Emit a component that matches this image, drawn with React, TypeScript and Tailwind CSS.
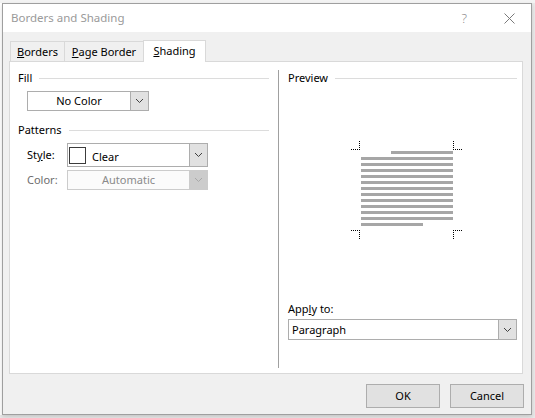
import React from "react";

const font = "font-['Noto_Sans',sans-serif] text-[11px] leading-[16px]";

const Chevron: React.FC<{ dim?: boolean }> = ({ dim }) => (
  <svg width="9" height="6" viewBox="0 0 9 6">
    <path d="M1 1 L4.5 4.5 L8 1" fill="none" stroke={dim ? "#a8a8a8" : "#404040"} strokeWidth="1" />
  </svg>
);

const DropButton: React.FC<{ dim?: boolean }> = ({ dim }) => (
  <div
    className={`flex w-[18px] shrink-0 items-center justify-center border-l ${
      dim ? "border-[#cccccc] bg-[#cccccc]" : "border-[#adadad] bg-[#e1e1e1]"
    }`}
  >
    <Chevron dim={dim} />
  </div>
);

const SectionHeader: React.FC<{ label: string; className?: string }> = ({ label, className }) => (
  <div className={`flex h-[16px] items-center gap-[7px] ${className ?? ""}`}>
    <span className="text-black">{label}</span>
    <div className="h-px flex-1 bg-[#dcdcdc]" />
  </div>
);

// dotted corner marks + text lines of the preview
const PreviewGraphic: React.FC = () => {
  const lines = Array.from({ length: 11 }, (_, i) => 17 + i * 6);
  const dot = { stroke: "#000", strokeWidth: 1, strokeDasharray: "1 1" };
  return (
    <svg width="113" height="100" viewBox="0 0 113 100" className="ml-[72px] mt-[54px] block">
      <line x1="0" y1="9.5" x2="9" y2="9.5" {...dot} />
      <line x1="8.5" y1="1" x2="8.5" y2="10" {...dot} />
      <line x1="102.5" y1="1" x2="102.5" y2="10" {...dot} />
      <line x1="102" y1="9.5" x2="112" y2="9.5" {...dot} />
      <rect x="40" y="11" width="62" height="3" fill="#a6a6a6" />
      {lines.map((y) => (
        <rect key={y} x="10" y={y} width="92" height="3" fill="#a6a6a6" />
      ))}
      <rect x="10" y="83" width="62" height="3" fill="#a6a6a6" />
      <line x1="0" y1="90.5" x2="9" y2="90.5" {...dot} />
      <line x1="8.5" y1="90" x2="8.5" y2="100" {...dot} />
      <line x1="102.5" y1="90" x2="102.5" y2="100" {...dot} />
      <line x1="102" y1="90.5" x2="112" y2="90.5" {...dot} />
    </svg>
  );
};

const App: React.FC = () => {
  return (
    <div className={`h-[418px] w-[535px] overflow-hidden bg-[#e9e9e9] ${font}`}>
      <div className="h-[3px] bg-[#f3f3f3]" />
      <div className="flex">
        <div className="w-[2px] bg-white" />
        <div className="flex h-[412px] w-[530px] flex-col border border-[#9f9f9f] bg-[#f0f0f0] shadow-[0_2px_4px_rgba(0,0,0,0.15)]">
          {/* title bar */}
          <div className="flex h-[28px] shrink-0 items-center bg-white pl-[8px]">
            <span className="text-[11.5px] text-[#9a9a9a]">Borders and Shading</span>
            <span className="ml-auto text-[13px] font-light text-[#8a8a8a]">?</span>
            <svg width="11" height="11" viewBox="0 0 11 11" className="ml-[37px] mr-[16px]">
              <path d="M0.5 0.5 L10.5 10.5 M10.5 0.5 L0.5 10.5" stroke="#7a7a7a" strokeWidth="1" />
            </svg>
          </div>

          {/* body */}
          <div className="flex flex-1 flex-col pl-[6px] pr-[7px] pt-[8px]">
            <div className="relative z-10 ml-[1px] flex h-[22px] items-end">
              <div className="mb-[1px] flex h-[20px] w-[55px] items-center justify-center border-x border-t border-[#d9d9d9] text-black">
                <span><span className="underline">B</span>orders</span>
              </div>
              <div className="mb-[1px] flex h-[20px] w-[78px] items-center justify-center border-t border-[#d9d9d9] text-black">
                <span><span className="underline">P</span>age Border</span>
              </div>
              <div className="flex h-[22px] w-[63px] items-center justify-center border-x border-t border-[#d9d9d9] bg-white pb-[1px] text-black">
                <span><span className="underline">S</span>hading</span>
              </div>
            </div>

            {/* tab panel */}
            <div className="-mt-px mr-px flex h-[313px] border border-[#d9d9d9] bg-white">
              {/* left column */}
              <div className="flex w-[268px] flex-col">
                <SectionHeader label="Fill" className="ml-[8px] mr-[9px] mt-[8px]" />
                <div className="ml-[17px] mt-[5px] flex h-[20px] w-[122px] border border-[#adadad]">
                  <div className="flex flex-1 items-center justify-center text-black">No Color</div>
                  <DropButton />
                </div>
                <SectionHeader label="Patterns" className="ml-[8px] mr-[9px] mt-[11px]" />
                <div className="ml-[17px] mt-[5px] flex items-center">
                  <span className="w-[40px] text-black">
                    St<span className="underline">y</span>le:
                  </span>
                  <div className="flex h-[24px] w-[141px] border border-[#adadad]">
                    <div className="flex flex-1 items-center">
                      <div className="ml-[1px] h-[17px] w-[17px] border border-[#3c3c3c] bg-white" />
                      <span className="ml-[6px] mt-[3px] text-black">Clear</span>
                    </div>
                    <DropButton />
                  </div>
                </div>
                <div className="ml-[17px] mt-[3px] flex items-center">
                  <span className="w-[40px] text-[#6d6d6d]">Color:</span>
                  <div className="flex h-[20px] w-[141px] border border-[#cccccc] bg-[#fbfbfb]">
                    <div className="flex flex-1 items-center justify-center text-[#8a8a8a]">Automatic</div>
                    <DropButton dim />
                  </div>
                </div>
              </div>

              <div className="mb-[5px] mt-[8px] w-px bg-[#a0a0a0]" />

              {/* right column */}
              <div className="flex flex-1 flex-col pb-[33px]">
                <SectionHeader label="Preview" className="ml-[9px] mr-[5px] mt-[8px] gap-[5px]" />
                <PreviewGraphic />
                <div className="ml-[9px] mt-auto h-[16px] text-black">
                  App<span className="underline">l</span>y to:
                </div>
                <div className="ml-[9px] mr-[5px] mt-[2px] flex h-[21px] border border-[#adadad]">
                  <div className="flex flex-1 items-center pl-[3px] text-black">Paragraph</div>
                  <DropButton />
                </div>
              </div>
            </div>

            {/* footer */}
            <div className="mt-[10px] flex justify-end gap-[10px]">
              <button className="flex h-[24px] w-[74px] items-center justify-center border border-[#adadad] bg-[#e1e1e1] text-black">
                OK
              </button>
              <button className="flex h-[24px] w-[74px] items-center justify-center border border-[#adadad] bg-[#e1e1e1] text-black">
                Cancel
              </button>
            </div>
          </div>
        </div>
      </div>
    </div>
  );
};

export default App;
